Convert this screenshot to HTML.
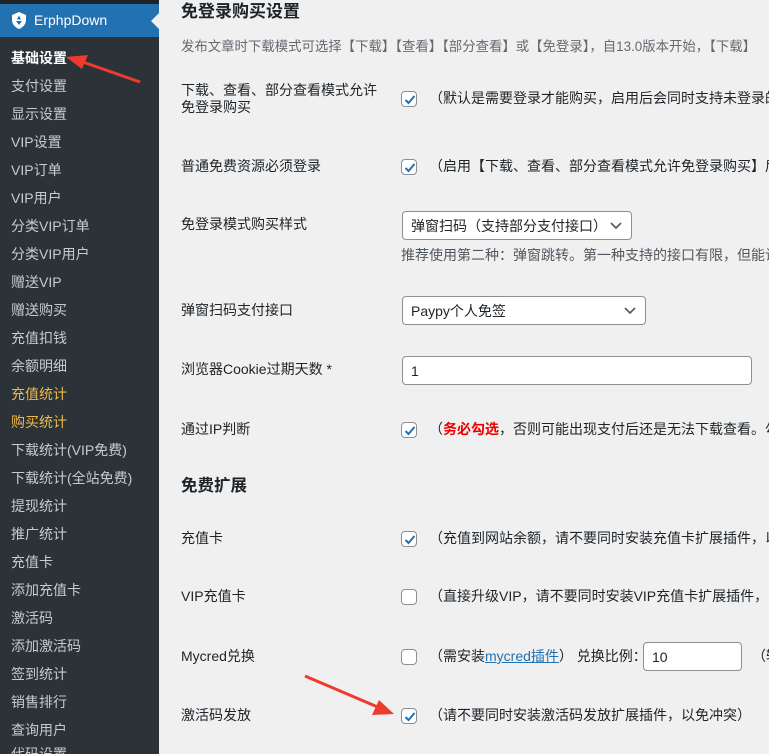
<!DOCTYPE html>
<html style="overflow:hidden;height:754px"><head><meta charset="utf-8"><style>
*{margin:0;padding:0;box-sizing:border-box}
body{width:769px;height:754px;overflow:hidden;background:#f0f0f1;font-family:"Liberation Sans","Noto Sans CJK SC",sans-serif;font-size:14px;color:#1d2327;position:relative}
#side{position:absolute;left:0;top:0;width:159px;height:754px;background:#2c3338;overflow:hidden}
#topbar{position:absolute;left:0;top:0;width:159px;height:4px;background:#1d2327}
#cur{position:absolute;left:0;top:4px;width:159px;height:33px;background:#2271b1;color:#fff;font-size:14px}
#cur span{position:absolute;left:34px;top:8px}
#cur:after{content:"";position:absolute;right:0;top:9px;border:8px solid transparent;border-right-color:#f0f0f1}
.mi{position:absolute;left:11px;font-size:14px;color:#c8cacc;line-height:16px}
.a{position:absolute;white-space:nowrap;line-height:17px}
.cb{position:absolute;width:16px;height:16px;border:1px solid #8c8f94;border-radius:4px;background:#fff}
.cb svg{position:absolute;left:0;top:0}
.box{position:absolute;background:#fff;border:1px solid #8c8f94;border-radius:4px;font-size:14px;padding:6px 8px;line-height:16px}
.box svg{position:absolute;right:9px;top:10px}
</style></head><body>
<div id="side">
<div id="topbar"></div>
<div id="cur"><svg style="position:absolute;left:11px;top:8px" width="16" height="17" viewBox="0 0 16 17"><path d="M8 0L1 3v5c0 4 3 7.5 7 9 4-1.5 7-5 7-9V3z" fill="#fff"/><path d="M8 3.5l2 4H6zM5 9h6l-3 4z" fill="#2271b1"/></svg><span>ErphpDown</span></div>
<div class="mi" style="top:50px;color:#fff;font-weight:bold">基础设置</div>
<div class="mi" style="top:78px">支付设置</div>
<div class="mi" style="top:106px">显示设置</div>
<div class="mi" style="top:134px">VIP设置</div>
<div class="mi" style="top:162px">VIP订单</div>
<div class="mi" style="top:190px">VIP用户</div>
<div class="mi" style="top:218px">分类VIP订单</div>
<div class="mi" style="top:246px">分类VIP用户</div>
<div class="mi" style="top:274px">赠送VIP</div>
<div class="mi" style="top:302px">赠送购买</div>
<div class="mi" style="top:330px">充值扣钱</div>
<div class="mi" style="top:358px">余额明细</div>
<div class="mi" style="top:386px;color:#f0b849">充值统计</div>
<div class="mi" style="top:414px;color:#f0b849">购买统计</div>
<div class="mi" style="top:442px">下载统计(VIP免费)</div>
<div class="mi" style="top:470px">下载统计(全站免费)</div>
<div class="mi" style="top:498px">提现统计</div>
<div class="mi" style="top:526px">推广统计</div>
<div class="mi" style="top:554px">充值卡</div>
<div class="mi" style="top:582px">添加充值卡</div>
<div class="mi" style="top:610px">激活码</div>
<div class="mi" style="top:638px">添加激活码</div>
<div class="mi" style="top:666px">签到统计</div>
<div class="mi" style="top:694px">销售排行</div>
<div class="mi" style="top:722px">查询用户</div>
<div class="mi" style="top:746px">代码设置</div>
</div>

<div class="a" style="left:181px;top:1px;font-size:17px;font-weight:bold;line-height:22px">免登录购买设置</div>
<div class="a" style="left:181px;top:38px;font-size:13.4px;color:#646970">发布文章时下载模式可选择【下载】【查看】【部分查看】或【免登录】，自13.0版本开始，【下载】</div>

<div class="a" style="left:181px;top:82px;line-height:17px">下载、查看、部分查看模式允许<br>免登录购买</div>
<div class="cb" style="left:401px;top:91px"><svg width="16" height="16"><path d="M3.5 8l3 3 6-7" stroke="#2271b1" stroke-width="2" fill="none"/></svg></div>
<div class="a" style="left:429px;top:90px">（默认是需要登录才能购买，启用后会同时支持未登录的</div>

<div class="a" style="left:181px;top:158px">普通免费资源必须登录</div>
<div class="cb" style="left:401px;top:159px"><svg width="16" height="16"><path d="M3.5 8l3 3 6-7" stroke="#2271b1" stroke-width="2" fill="none"/></svg></div>
<div class="a" style="left:429px;top:158px">（启用【下载、查看、部分查看模式允许免登录购买】后</div>

<div class="a" style="left:181px;top:216px">免登录模式购买样式</div>
<div class="box" style="left:402px;top:211px;width:230px;height:29px">弹窗扫码（支持部分支付接口）<svg width="12" height="8"><path d="M1 1l5 5 5-5" stroke="#50575e" stroke-width="1.6" fill="none"/></svg></div>
<div class="a" style="left:401px;top:247px;color:#50575e">推荐使用第二种：弹窗跳转。第一种支持的接口有限，但能让</div>

<div class="a" style="left:181px;top:302px">弹窗扫码支付接口</div>
<div class="box" style="left:402px;top:296px;width:244px;height:29px">Paypy个人免签<svg width="12" height="8"><path d="M1 1l5 5 5-5" stroke="#50575e" stroke-width="1.6" fill="none"/></svg></div>

<div class="a" style="left:181px;top:361px">浏览器Cookie过期天数 *</div>
<div class="box" style="left:402px;top:356px;width:350px;height:29px">1</div>

<div class="a" style="left:181px;top:421px">通过IP判断</div>
<div class="cb" style="left:401px;top:422px"><svg width="16" height="16"><path d="M3.5 8l3 3 6-7" stroke="#2271b1" stroke-width="2" fill="none"/></svg></div>
<div class="a" style="left:429px;top:421px">（<b style="color:#e00">务必勾选</b>，否则可能出现支付后还是无法下载查看。勾</div>

<div class="a" style="left:181px;top:476px;font-size:16.5px;font-weight:bold;line-height:20px">免费扩展</div>

<div class="a" style="left:181px;top:530px">充值卡</div>
<div class="cb" style="left:401px;top:531px"><svg width="16" height="16"><path d="M3.5 8l3 3 6-7" stroke="#2271b1" stroke-width="2" fill="none"/></svg></div>
<div class="a" style="left:429px;top:530px">（充值到网站余额，请不要同时安装充值卡扩展插件，以</div>

<div class="a" style="left:181px;top:588px">VIP充值卡</div>
<div class="cb" style="left:401px;top:589px"></div>
<div class="a" style="left:429px;top:588px">（直接升级VIP，请不要同时安装VIP充值卡扩展插件，以</div>

<div class="a" style="left:181px;top:648px">Mycred兑换</div>
<div class="cb" style="left:401px;top:649px"></div>
<div class="a" style="left:429px;top:648px">（需安装<span style="color:#2271b1;text-decoration:underline">mycred插件</span>） 兑换比例：</div>
<div class="box" style="left:643px;top:642px;width:99px;height:29px">10</div>
<div class="a" style="left:752px;top:648px">（输</div>

<div class="a" style="left:181px;top:707px">激活码发放</div>
<div class="cb" style="left:401px;top:708px"><svg width="16" height="16"><path d="M3.5 8l3 3 6-7" stroke="#2271b1" stroke-width="2" fill="none"/></svg></div>
<div class="a" style="left:429px;top:707px">（请不要同时安装激活码发放扩展插件，以免冲突）</div>

<svg style="position:absolute;left:0;top:0" width="769" height="754">
<path d="M140 82L80 61" stroke="#f03a2e" stroke-width="3"/>
<path d="M66 57L88 55L82 69z" fill="#f03a2e"/>
<path d="M305 676L380 708" stroke="#f03a2e" stroke-width="3"/>
<path d="M394 714L372 715L379 700z" fill="#f03a2e"/>
</svg>
</body></html>
